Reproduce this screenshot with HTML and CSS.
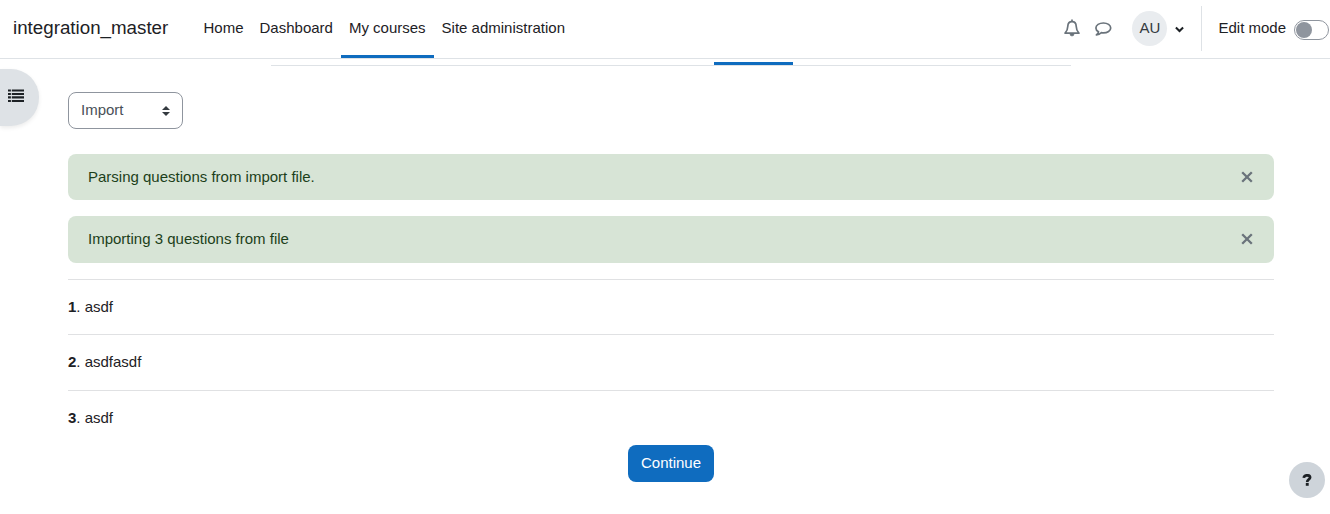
FILE: index.html
```html
<!DOCTYPE html>
<html lang="en">
<head>
<meta charset="utf-8">
<title>Import questions</title>
<link rel="stylesheet" href="styles.css">
</head>
<body>
<header class="navbar">
  <a class="brand">integration_master</a>
  <nav class="nav">
    <a class="nav-item">Home</a>
    <a class="nav-item">Dashboard</a>
    <a class="nav-item active">My courses</a>
    <a class="nav-item">Site administration</a>
  </nav>
  <div class="user-tools">
    <svg class="bell" width="16" height="18" viewBox="0 0 16 18" fill="none" stroke="#6a737b" stroke-width="1.7" stroke-linejoin="round"><path d="M8 2.700C5.200 2.700 3.900 4.700 3.800 7.200C3.700 10.500 2.900 12.300 1.100 14.200H14.900C13.100 12.300 12.300 10.500 12.200 7.200C12.100 4.700 10.800 2.700 8 2.700Z"/><path d="M8 .6V2.500"/><path d="M6 15H10A2 2 0 0 1 6 15Z" fill="#6a737b" stroke-width=".6"/></svg>
    <svg class="comment" width="18" height="16" viewBox="0 0 18 16" fill="none" stroke="#6a737b" stroke-width="1.7" stroke-linejoin="round"><path d="M9.400 2C5.200 2 1.900 4.100 1.900 6.900C1.900 8.500 2.900 9.900 4.500 10.800C4.300 12 3.500 13 2.400 13.900C4.500 13.700 6.100 12.900 7.200 11.700C7.900 11.800 8.600 11.900 9.400 11.900C13.500 11.900 16.700 9.700 16.700 6.900C16.700 4.100 13.500 2 9.400 2Z"/></svg>
    <span class="avatar">AU</span>
    <svg class="caret" width="9" height="7" viewBox="0 0 9 7" fill="none" stroke="#1d2125" stroke-width="2"><path d="M.9 1.500L4.500 5L8.100 1.500"/></svg>
    <div class="edit-mode"><span>Edit mode</span><span class="switch"><span class="knob"></span></span></div>
  </div>
</header>
<div class="tab-strip"><span class="tab-marker"></span></div>
<button class="drawer-toggle" aria-label="Open course index">
  <svg width="16" height="14" viewBox="0 0 16 14" fill="#1d2125"><path d="M0 .5h2.900v2.100H0zM3.800 .5H16v2.100H3.800zM0 4h2.900v2H0zM3.800 4H16v2H3.800zM0 7.200h2.900v2.200H0zM3.800 7.200H16v2.200H3.800zM0 10.900h2.900v2.100H0zM3.800 10.900H16v2.100H3.800z"/></svg>
</button>
<main class="page">
  <div class="select"><span>Import</span>
    <svg width="8" height="10" viewBox="0 0 8 10" fill="#343a40"><path d="M0 4L4 0L8 4ZM0 6H8L4 10Z"/></svg>
  </div>
  <div class="alert"><span>Parsing questions from import file.</span><svg class="close" width="12" height="12" viewBox="0 0 12 12"><path d="M1.200 1.200L10.800 10.800M10.800 1.200L1.200 10.800"/></svg></div>
  <div class="alert"><span>Importing 3 questions from file</span><svg class="close" width="12" height="12" viewBox="0 0 12 12"><path d="M1.200 1.200L10.800 10.800M10.800 1.200L1.200 10.800"/></svg></div>
  <div class="question"><b>1</b>. asdf</div>
  <div class="question"><b>2</b>. asdfasdf</div>
  <div class="question"><b>3</b>. asdf</div>
  <button class="continue">Continue</button>
</main>
<button class="help" aria-label="Help"><svg width="10" height="12" viewBox="0 0 10 12"><path d="M1.800 3.900C2 2.200 3.100 1.300 5 1.300C6.900 1.300 8.100 2.200 8.100 3.600C8.100 5.600 5.200 5.400 5.200 7.900" fill="none" stroke="#1d2125" stroke-width="2.700"/><path d="M3.800 8.900H6.700V11.800H3.800Z" fill="#1d2125"/></svg></button>
</body>
</html>
```
FILE: styles.css
```css
* { box-sizing: border-box; }
body {
  margin: 0;
  height: 514px;
  overflow: hidden;
  position: relative;
  background: #fff;
  color: #1d2125;
  font: 15px/22.5px "Liberation Sans", Arial, sans-serif;
}
button { border: 0; padding: 0; font: inherit; color: inherit; }
.navbar {
  display: flex;
  height: 59px;
  padding-left: 13px;
  border-bottom: 1px solid #dee2e6;
}
.brand { width: 182.500px; font-size: 18.750px; line-height: 56px; }
.nav { display: flex; }
.nav-item {
  padding: 0 8px;
  line-height: 55px;
  border-bottom: 3px solid transparent;
}
.nav-item.active { border-bottom-color: #0f6cbf; }
.user-tools {
  display: flex;
  align-items: center;
  height: 56px;
  margin-left: auto;
  padding-right: 1px;
}
.bell { margin-right: 14px; }
.comment { margin: 2px 20px 0 0; }
.avatar {
  width: 35px;
  height: 35px;
  border-radius: 50%;
  background: #e9ecef;
  color: #343a40;
  line-height: 33px;
  text-align: center;
}
.caret { margin: 3px 17px 0 8px; }
.edit-mode {
  display: flex;
  align-items: center;
  height: 45px;
  padding-left: 16px;
  border-left: 1px solid #dee2e6;
}
.switch {
  width: 35px;
  height: 20px;
  margin: 4px 0 0 8px;
  padding: 1px;
  border: 1px solid #8f959e;
  border-radius: 10px;
}
.knob {
  display: block;
  width: 16px;
  height: 16px;
  border-radius: 50%;
  background: #8f959e;
}
.tab-strip {
  width: 800px;
  height: 7px;
  margin-left: 271px;
  padding: 3px 0 0 443px;
  border-bottom: 1px solid #dee2e6;
}
.tab-marker { display: block; width: 79px; height: 3px; background: #0f6cbf; }
.drawer-toggle {
  position: absolute;
  left: 0;
  top: 69px;
  width: 39px;
  height: 57px;
  padding: 0 15px 3px 0;
  display: flex;
  align-items: center;
  justify-content: flex-end;
  border-radius: 0 28px 28px 0;
  background: #dee2e6;
  box-shadow: 0 2px 4px rgba(0, 0, 0, .08);
}
.page {
  display: flex;
  flex-direction: column;
  width: 1206px;
  margin-left: 68px;
  padding-top: 26px;
}
.select {
  display: flex;
  align-items: center;
  justify-content: space-between;
  width: 115px;
  height: 37px;
  margin-bottom: 24.800px;
  padding: 0 12px;
  border: 1px solid #8f959e;
  border-radius: 8px;
  color: #495057;
}
.select span { margin-top: -1px; }
.alert {
  display: flex;
  align-items: center;
  justify-content: space-between;
  height: 46.500px;
  margin-bottom: 16px;
  padding: 0 21px 0 20px;
  border-radius: 8px;
  background: #d7e4d6;
  color: #1c3f1a;
}
.close { margin-top: -1px; fill: none; stroke: #6a737b; stroke-width: 2.300; }
.question {
  height: 55.500px;
  padding-top: 16px;
  border-top: 1px solid #e0e1e3;
}
.continue {
  align-self: center;
  width: 86px;
  height: 37px;
  padding-bottom: 1.500px;
  border-radius: 8px;
  background: #0f6cbf;
  color: #fff;
}
.help {
  position: absolute;
  left: 1289px;
  top: 462px;
  display: flex;
  align-items: center;
  justify-content: center;
  width: 36px;
  height: 36px;
  border-radius: 50%;
  background: #ced4da;
}
```
